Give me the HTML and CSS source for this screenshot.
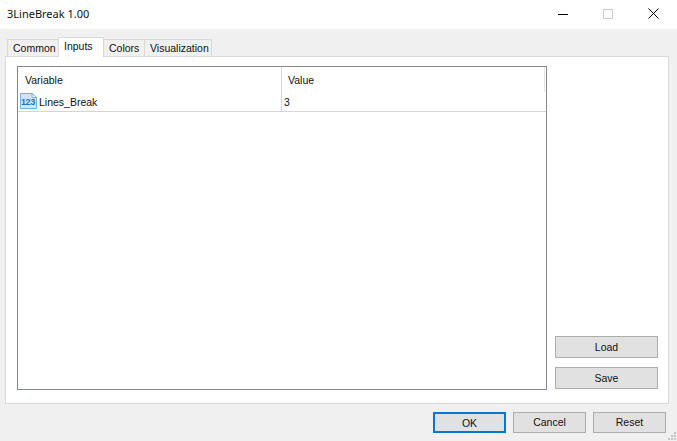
FILE: index.html
```html
<!DOCTYPE html>
<html lang="en">
<head>
<meta charset="utf-8">
<title>3LineBreak 1.00</title>
<link rel="stylesheet" href="styles.css">
</head>
<body>
<div class="window">
  <header class="titlebar">
    <span class="title">3LineBreak 1.00</span>
    <div class="controls">
      <svg class="ctl" width="10" height="10" viewBox="0 0 10 10"><path d="M0 5.5H10" stroke="#000" fill="none"/></svg>
      <svg class="ctl" width="10" height="10" viewBox="0 0 10 10"><rect x=".5" y=".5" width="9" height="9" stroke="#ccc" fill="none"/></svg>
      <svg class="ctl" width="11" height="11" viewBox="0 0 11 11"><path d="M.5 .5L10.500 10.500M10.500 .5L.5 10.500" stroke="#000" fill="none"/></svg>
    </div>
  </header>
  <main class="body">
    <nav class="tabs">
      <span class="tab">Common</span>
      <span class="tab active">Inputs</span>
      <span class="tab">Colors</span>
      <span class="tab">Visualization</span>
    </nav>
    <section class="panel">
      <div class="table">
        <div class="row head">
          <div class="cell c1">Variable</div>
          <div class="cell c2">Value</div>
        </div>
        <div class="row data">
          <div class="cell c1">
            <svg class="ico" width="17" height="16" viewBox="0 0 17 16">
              <path d="M.5 .5H12L16.500 4.500V15.500H.5Z" fill="#cfe6fa" stroke="#6fb2ea"/>
              <path d="M12 .5V4.500H16.500Z" fill="#fff" stroke="#6fb2ea"/>
              <text x="1" y="11.500" class="ico-text">123</text>
            </svg>
            <span>Lines_Break</span>
          </div>
          <div class="cell c2 val">3</div>
        </div>
      </div>
      <aside class="side">
        <button class="btn side-btn">Load</button>
        <button class="btn side-btn">Save</button>
      </aside>
    </section>
    <footer class="footer">
      <button class="btn foot-btn default">OK</button>
      <button class="btn foot-btn">Cancel</button>
      <button class="btn foot-btn">Reset</button>
    </footer>
  </main>
  <svg class="grip" width="9" height="9" viewBox="0 0 9 9">
    <path d="M6 0h2v2H6zM3 3h2v2H3zM6 3h2v2H6zM0 6h2v2H0zM3 6h2v2H3zM6 6h2v2H6z" fill="#c4c4c4"/>
  </svg>
</div>
</body>
</html>
```
FILE: styles.css
```css
* { box-sizing: border-box; }
html, body { margin: 0; padding: 0; }
body { font-family: "Liberation Sans", Arial, sans-serif; font-size: 10.5px; color: #111; }
.window { position: relative; width: 677px; height: 441px; background: #f0f0f0; display: flex; flex-direction: column; overflow: hidden; }
.titlebar { height: 29px; background: #fff; display: flex; align-items: center; justify-content: space-between; padding: 0 0 2px 7px; flex: none; }
.title { font-family: "Noto Sans", sans-serif; font-size: 11px; }
.controls { display: flex; align-items: center; gap: 35px; padding-right: 18px; }
.ctl { display: block; }
.body { flex: 1; display: flex; flex-direction: column; padding: 8px 8px 0 5px; }
.tabs { display: flex; height: 19px; padding-left: 2px; align-items: flex-end; position: relative; z-index: 1; }
.tab { height: 17px; padding: 0 5px; line-height: 16px; background: #f0f0f0; border: 1px solid #d9d9d9; border-bottom: 0; margin-right: -1px; white-space: nowrap; }
.tab:nth-child(1) { width: 52px; }
.tab:nth-child(3) { width: 42px; }
.tab:nth-child(4) { width: 68px; }
.tab.active { background: #fff; height: 20px; width: 46px; margin-bottom: -1px; line-height: 17px; position: relative; }
.panel { height: 348px; width: 664px; background: #fff; border: 1px solid #d9d9d9; display: flex; padding: 9px 10px 13px 11px; gap: 8px; }
.table { width: 530px; border: 1px solid #828790; background: #fff; flex: none; }
.row { display: flex; }
.head { height: 25px; line-height: 25px; }
.head .cell { padding-top: 2px; }
.data { line-height: 17px; border-bottom: 1px solid #d5d5d5; height: 20px; }
.data .cell { padding-top: 2px; }
.cell { display: flex; align-items: center; }
.c1 { width: 264px; border-right: 1px solid #d5d5d5; }
.c2 { flex: 1; }
.head .c1 { padding-left: 7px; }
.head .c2 { padding-left: 6px; margin-right: 1px; border-right: 1px solid #e3e3e3; }
.data .c1 { padding-left: 2px; gap: 2px; }
.val { padding-left: 2px; }
.ico { display: block; flex: none; margin-top: -4px; }
.ico-text { font-family: "Liberation Sans", sans-serif; font-size: 9px; font-weight: bold; fill: #2a6fc4; letter-spacing: -.4px; }
.side { flex: 1; display: flex; flex-direction: column; justify-content: flex-end; gap: 9px; padding-bottom: 1px; }
.btn { font: inherit; color: #111; background: #e1e1e1; border: 1px solid #adadad; padding: 0 0 1px; display: block; }
.side-btn { width: 103px; height: 22px; }
.footer { display: flex; justify-content: flex-end; gap: 7px; padding-top: 8px; padding-right: 3px; }
.foot-btn { width: 73px; height: 21px; }
.default { border: 2px solid #0078d7; padding: 0; }
.grip { position: absolute; right: 0; bottom: 0; }
```
